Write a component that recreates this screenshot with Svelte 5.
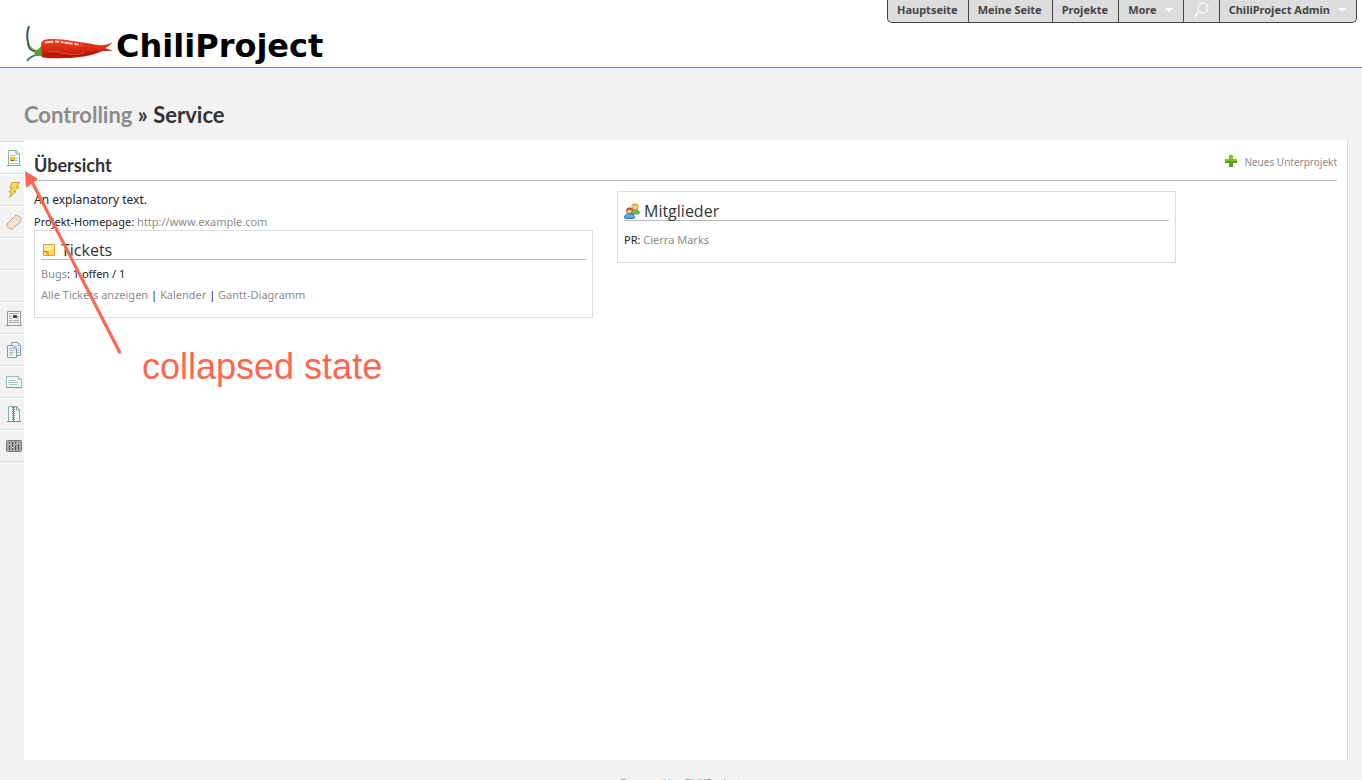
<script>
  const topMenu = [
    { label: "Hauptseite" },
    { label: "Meine Seite" },
    { label: "Projekte" },
    { label: "More", arrow: true },
    { label: "Suche", search: true },
    { label: "ChiliProject Admin", arrow: true }
  ];

  const sidebar = [
    { icon: "overview", label: "Übersicht", selected: true },
    { icon: "activity", label: "Aktivität" },
    { icon: "tickets", label: "Tickets" },
    { icon: "", label: "Kalender" },
    { icon: "", label: "Gantt-Diagramm" },
    { icon: "news", label: "News" },
    { icon: "documents", label: "Dokumente" },
    { icon: "wiki", label: "Wiki" },
    { icon: "files", label: "Dateien" },
    { icon: "settings", label: "Konfiguration" }
  ];
</script>

<div class="page">
  <header>
    <a class="logo" href="#home">
      <svg width="92" height="40" viewBox="0 0 92 40" aria-hidden="true">
        <defs>
          <linearGradient id="chili" x1="0" y1="0" x2="0" y2="1">
            <stop offset="0" stop-color="#ee4526" />
            <stop offset=".5" stop-color="#d92a10" />
            <stop offset="1" stop-color="#b01a0a" />
          </linearGradient>
        </defs>
        <path d="M5 1C3 6 3 13 4 18Q5 25 10 26L16 27" fill="none" stroke="#315f40" stroke-width="2" />
        <path d="M5 18Q7 25 15 26" fill="none" stroke="#7db943" stroke-width="1" />
        <path d="M3 36Q8 29 17 30" fill="none" stroke="#3c7464" stroke-width="1.800" />
        <path d="M10 26Q15 25 17 21L21 23L20 33Q15 29 11 31Z" fill="#5d9f2c" />
        <path d="M17 19C18 14 23 14 30 14C42 14 52 17 63 18C73 20 81 22 88 17Q86 21 81 23L89 26L79 26C67 31 54 33 42 33C32 33 24 34 18 32Q18 26 17 19Z" fill="url(#chili)" />
        <path d="M21 17.500Q30 16 37 17T57 20" fill="none" stroke="#ffd5c4" stroke-width="2" stroke-dasharray="8 2 4 2 3 1" />
        <path d="M20 30Q28 27 36 30Q46 32 56 30T74 26" fill="none" stroke="#94180c" stroke-width="1" />
        <path d="M24 27Q32 25 40 28T60 28" fill="none" stroke="#e5492f" stroke-width="1" />
      </svg>
      <span>ChiliProject</span>
    </a>
    <nav class="top-menu">
      {#each topMenu as item}
        {#if item.search}
          <button class="search" aria-label={item.label}>
            <svg width="16" height="18" viewBox="0 0 16 18">
              <circle cx="10" cy="7" r="5" fill="none" stroke="#f5f5f5" stroke-width="1.600" />
              <path d="M6 11L1 16" stroke="#f5f5f5" stroke-width="2.400" />
            </svg>
          </button>
        {:else}
          <a href="#top">
            {item.label}
            {#if item.arrow}<i class="arrow"></i>{/if}
          </a>
        {/if}
      {/each}
    </nav>
  </header>

  <h1><a href="#controlling">Controlling</a> » Service</h1>

  <div class="columns">
    <nav class="sidebar">
      {#each sidebar as item}
        <a href="#menu" class:selected={item.selected} aria-label={item.label}>
          <svg width="16" height="16" viewBox="0 0 16 16">
            {#if item.icon === "overview"}
              <path d="M2.500 .5H10L13.500 4V15.500H2.500Z" fill="#f4fafa" stroke="#8fb0b1" />
              <path d="M10 .5V4H13.500" fill="#cfe2e2" stroke="#8fb0b1" />
              <path d="M4 5.500H9M9 8.500H12M9 10.500H12M4 13.500H12" stroke="#a9c3c4" />
              <rect x="4" y="7" width="5" height="4" fill="#f2c21c" />
              <path d="M5 10.500H8" stroke="#555" />
              <path d="M1 15.500H15" stroke="#8aa5a5" />
            {:else if item.icon === "activity"}
              <path d="M6 .5H13.500L10.500 5H13L7.500 9.500H10L3.500 15.500L5.500 10H3L6.500 6H4Z" fill="#f8dc4e" stroke="#c9a63c" />
            {:else if item.icon === "tickets"}
              <path d="M.5 10.500L10 1L11.500 2.500L12.500 1.500L15.500 5L14 6.500L15 7.500L5.500 15.500L4.500 14L3 14.500L1 12.500L2 11.500Z" fill="#f4e0cf" stroke="#c2a287" />
              <path d="M4 10L10 4M6.500 12L12 7" stroke="#fff3e6" />
              <path d="M9.500 4L12.500 7.500" stroke="#c9a88b" stroke-dasharray="1 1" />
            {:else if item.icon === "news"}
              <path d="M1.500 1.500H14.500V15.500H1.500Z" fill="#f3f3f1" stroke="#999" />
              <path d="M3 3.500H13M3 6.500H6M3 8.500H6M3 10.500H6M11 6.500H13M11 8.500H13M3 12.500H13M7 10.500H13" stroke="#aaa" />
              <rect x="7" y="5" width="4" height="3" fill="#444" />
              <path d="M0 15.500H16" stroke="#999" />
            {:else if item.icon === "documents"}
              <path d="M5.500 .5H12L14.500 3V13.500H5.500Z" fill="#edf8f8" stroke="#7da2a2" />
              <path d="M12 .5V3.500H14.500M8 4.500H11M10 6.500H13M10 8.500H13M10 10.500H13" fill="none" stroke="#a1bfbf" />
              <path d="M1.500 3.500H7L10.500 7V15.500H1.500Z" fill="#edf8f8" stroke="#7da2a2" />
              <path d="M7 3.500V7H10.500M3 6.500H6M3 8.500H8M3 10.500H8M3 12.500H7" fill="none" stroke="#a1bfbf" />
            {:else if item.icon === "wiki"}
              <path d="M.5 2.500H12L15.500 5.500V13.500H.5Z" fill="#edf8f8" stroke="#9bbaba" />
              <path d="M12 2.500V5.500H15.500M3 6.500H10M2 8.500H12M3 10.500H11" fill="none" stroke="#a9c4c4" />
              <path d="M0 13.500H16" stroke="#7c9a9a" />
            {:else if item.icon === "files"}
              <path d="M2.500 .5H11L13.500 3.500V15.500H2.500Z" fill="#edf8f8" stroke="#8bacac" />
              <path d="M10.500 .5V4H13.500" fill="none" stroke="#80a4a4" />
              <path d="M7.500 1V15" stroke="#888" stroke-width="3" stroke-dasharray="1 1" />
              <path d="M7.500 1V15M1 15.500H15" stroke="#888" />
            {:else if item.icon === "settings"}
              <rect x=".5" y="2.500" width="15" height="11" rx="1" fill="#aaa" stroke="#777" />
              <path d="M3.500 4V12M6.500 4V12M9.500 4V12M12.500 4V12" stroke="#555" />
              <path d="M3 6.500H4M6 9.500H7M9 6.500H10M12 5.500H13" stroke="#eee" />
            {/if}
          </svg>
        </a>
      {/each}
    </nav>

    <main>
      <div class="title">
        <h2>Übersicht</h2>
        <a href="#new">
          <svg width="14" height="14" viewBox="0 0 14 14" aria-hidden="true">
            <path d="M5 1H9V5H13V9H9V13H5V9H1V5H5Z" fill="#55a01f" />
            <path d="M5 1H9V5H13V7H1V5H5Z" fill="#86bf1f" />
          </svg>
          Neues Unterprojekt
        </a>
      </div>

      <div class="split">
        <div>
          <p class="intro">An explanatory text.</p>
          <p>Projekt-Homepage: <a href="http://www.example.com">http://www.example.com</a></p>
          <section class="box">
            <h3>
              <svg width="16" height="16" viewBox="0 0 16 16" aria-hidden="true">
                <path d="M2.500 2.500H13.500V13.500H2.500Z" fill="#ffdc62" stroke="#e89d28" />
                <path d="M3 3H13V7L3 9Z" fill="#ffeb9e" />
                <path d="M3 8.500L7.500 13M3 9.500H7V13" fill="#fff2ba" stroke="#d98912" />
              </svg>
              Tickets
            </h3>
            <p><a href="#bugs">Bugs</a>: 1 offen / 1</p>
            <p><a href="#all">Alle Tickets anzeigen</a> | <a href="#calendar">Kalender</a> | <a href="#gantt">Gantt-Diagramm</a></p>
          </section>
        </div>
        <div>
          <section class="box members">
            <h3>
              <svg width="16" height="16" viewBox="0 0 16 16" aria-hidden="true">
                <path d="M7 10Q7 6.500 11 6.500T15.500 10L14 11H8Z" fill="#75bd59" stroke="#4a9137" />
                <circle cx="11" cy="4" r="3" fill="#ffd2a0" stroke="#cf9130" />
                <path d="M7.500 4Q7 .5 11 .5T14.500 4Q11 1.500 7.500 4" fill="#e6a936" />
                <path d="M.5 15Q.5 10.500 5.500 10.500T10.500 15L8 15.500H2Z" fill="#58a8f1" stroke="#2476c5" />
                <circle cx="5.500" cy="8" r="2.800" fill="#ffc396" stroke="#a65b33" />
                <path d="M2 8Q2 4.500 5.500 4.500T9 8Q5 5.500 2 8" fill="#a75b33" />
              </svg>
              Mitglieder
            </h3>
            <p>PR: <a href="#user">Cierra Marks</a></p>
          </section>
        </div>
      </div>

      <div class="note">
        <svg width="110" height="196" viewBox="0 0 110 196" aria-hidden="true">
          <path d="M9 15L100 191" stroke="#bbb" stroke-width="3" opacity=".5" />
          <path d="M8 13L99 190" stroke="#ff6650" stroke-width="3" />
          <path d="M4 8L17 16L5 25Z" fill="#ff6650" />
        </svg>
        <span>collapsed state</span>
      </div>
    </main>
  </div>

  <footer>Powered by <a href="#chiliproject">ChiliProject</a></footer>
</div>

<style>
  :global(body) {
    margin: 0;
    background: #f2f2f2;
  }

  .page {
    height: 100vh;
    overflow: hidden;
    color: #222;
    font: 11px/16px "Noto Sans", sans-serif;
  }

  a {
    color: #8c8c8c;
    text-decoration: none;
  }

  h1,
  h2,
  h3,
  p {
    margin: 0;
  }

  header {
    display: flex;
    justify-content: space-between;
    align-items: flex-start;
    height: 67px;
    padding: 0 5px 0 24px;
    background: #fff;
    border-bottom: 1px solid #ff5a0a;
  }

  .logo {
    display: flex;
    margin-top: 25px;
    color: #000;
    font: bold 32px/42px "DejaVu Sans", sans-serif;
  }

  .top-menu {
    display: flex;
    height: 22px;
    background: #ddd;
    border: 1px solid #444;
    border-top: 0;
    border-radius: 0 0 5px 5px;
  }

  .top-menu a,
  .top-menu .search {
    display: flex;
    align-items: center;
    gap: 8px;
    padding: 0 10px 2px 9px;
    border: 0 solid #444;
    background: none;
    color: #444;
    font-weight: bold;
  }

  .top-menu a + a,
  .top-menu .search {
    border-left-width: 1px;
  }

  .top-menu .search {
    border-right-width: 1px;
  }

  .arrow {
    border: 4px solid transparent;
    border-top-color: #fff;
    border-bottom: 0;
  }

  h1 {
    margin: 33px 24px 11px;
    color: #333;
    font: bold 22px/28px Lato, sans-serif;
  }

  .columns {
    display: flex;
    margin-right: 14px;
  }

  .sidebar {
    flex: 0 0 24px;
    align-self: flex-start;
    margin-top: 1px;
    border-top: 1px solid #e2e2e2;
  }

  .sidebar a {
    display: flex;
    height: 30px;
    padding-left: 6px;
    align-items: center;
    border-top: 1px solid #fff;
    border-bottom: 1px solid #ddd;
  }

  .sidebar .selected {
    background: #fafafa;
  }

  main {
    flex: 1;
    position: relative;
    box-sizing: border-box;
    min-height: 620px;
    padding: 10px;
    background: #fff;
    border-right: 1px solid #ddd;
  }

  .title {
    display: flex;
    justify-content: space-between;
    height: 30px;
    border-bottom: 1px solid #bbb;
  }

  .title a {
    display: flex;
    gap: 6px;
    margin-top: 4px;
    font-size: 10px;
  }

  h2 {
    color: #333;
    font: bold 18px/30px Lato, sans-serif;
  }

  .split {
    display: grid;
    grid-template-columns: repeat(2, 42.9%);
    gap: 24px;
    padding-top: 10px;
  }

  .intro {
    margin-bottom: 5px;
    font-size: 12px;
    line-height: 18px;
  }

  .box {
    padding: 6px 6px 9px;
    border: 1px solid #ddd;
  }

  .box h3 {
    display: flex;
    gap: 4px;
    align-items: center;
    margin-bottom: 6px;
    padding-top: 4px;
    border-bottom: 1px solid #bbb;
    color: #333;
    font: 16px/18px "Open Sans", sans-serif;
  }

  .box p {
    margin-bottom: 5px;
  }

  .members h3 {
    margin-bottom: 11px;
  }

  .note {
    position: absolute;
    top: 23px;
    left: -3px;
    color: #ff6650;
    font: 36px/42px "Liberation Sans", sans-serif;
  }

  .note span {
    position: absolute;
    top: 183px;
    left: 121px;
    white-space: nowrap;
  }

  footer {
    padding-top: 15px;
    text-align: center;
    color: #999;
  }
</style>
